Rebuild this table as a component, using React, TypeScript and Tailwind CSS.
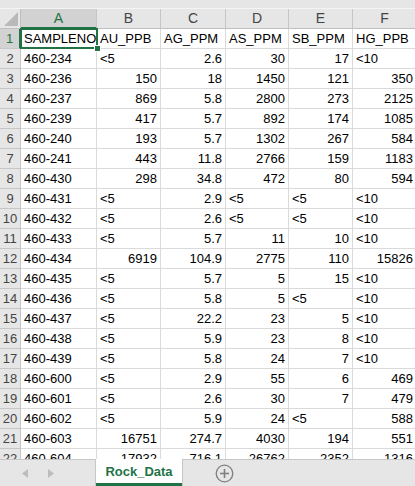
import React from "react";

const raw: string[][] = [
  ["SAMPLENO", "AU_PPB", "AG_PPM", "AS_PPM", "SB_PPM", "HG_PPB"],
  ["460-234", "<5", "2.6", "30", "17", "<10"],
  ["460-236", "150", "18", "1450", "121", "350"],
  ["460-237", "869", "5.8", "2800", "273", "2125"],
  ["460-239", "417", "5.7", "892", "174", "1085"],
  ["460-240", "193", "5.7", "1302", "267", "584"],
  ["460-241", "443", "11.8", "2766", "159", "1183"],
  ["460-430", "298", "34.8", "472", "80", "594"],
  ["460-431", "<5", "2.9", "<5", "<5", "<10"],
  ["460-432", "<5", "2.6", "<5", "<5", "<10"],
  ["460-433", "<5", "5.7", "11", "10", "<10"],
  ["460-434", "6919", "104.9", "2775", "110", "15826"],
  ["460-435", "<5", "5.7", "5", "15", "<10"],
  ["460-436", "<5", "5.8", "5", "<5", "<10"],
  ["460-437", "<5", "22.2", "23", "5", "<10"],
  ["460-438", "<5", "5.9", "23", "8", "<10"],
  ["460-439", "<5", "5.8", "24", "7", "<10"],
  ["460-600", "<5", "2.9", "55", "6", "469"],
  ["460-601", "<5", "2.6", "30", "7", "479"],
  ["460-602", "<5", "5.9", "24", "<5", "588"],
  ["460-603", "16751", "274.7", "4030", "194", "551"],
  ["460-604", "17932", "716.1", "26762", "2352", "1316"],
];

const widths = ["w-[76px]", "w-[64px]", "w-[65px]", "w-[63px]", "w-[64px]", "w-[64px]"];
const letters = ["A", "B", "C", "D", "E", "F"];

function isLeft(v: string, ri: number, ci: number) {
  if (ri === 0 || ci === 0) return true;
  return v.startsWith("<");
}

export default function App() {
  return (
    <div
      className="w-[415px] h-[486px] overflow-hidden flex flex-col bg-white text-[13px] text-black"
      style={{ fontFamily: '"Liberation Sans", Arial, sans-serif' }}
    >
      <div className="flex-1 overflow-hidden flex flex-col">
        <div className="h-[9px] shrink-0 bg-[#e6e6e6] border-b border-[#f4f4f4]" />
        {/* column headers */}
        <div className="flex h-[20px] shrink-0 bg-[#e6e6e6]">
          <div className="w-[21px] shrink-0 relative border-r border-b border-[#bfbfbf]">
            <svg className="absolute right-[2px] bottom-[2px]" width="14" height="14" viewBox="0 0 14 14">
              <polygon points="14,0 14,14 0,14" fill="#b9b9b9" />
            </svg>
          </div>
          {letters.map((l, i) => (
            <div
              key={l}
              className={`${widths[i]} shrink-0 flex items-center justify-center border-r ${
                i === 0
                  ? "bg-[#d2d2d2] text-[#217346] border-b-2 border-b-[#217346] border-r-[#c6c6c6]"
                  : "text-[#444444] border-b border-[#c6c6c6] border-b-[#bfbfbf]"
              } text-[14px]`}
            >
              {l}
            </div>
          ))}
        </div>
        {raw.map((row, ri) => (
          <div key={ri} className={`flex h-[20px] shrink-0 ${ri === 0 ? "relative z-10" : ""}`}>
            <div
              className={`w-[21px] shrink-0 flex items-center justify-center border-r border-b border-[#c6c6c6] text-[13px] ${
                ri === 0 ? "bg-[#d2d2d2] text-[#217346] border-r-2 border-r-[#217346]" : "bg-[#e6e6e6] text-[#444444]"
              }`}
            >
              {ri + 1}
            </div>
            {row.map((v, ci) => (
              <div
                key={ci}
                className={`${widths[ci]} shrink-0 relative flex items-center border-r border-b border-[#dadada] whitespace-nowrap ${
                  isLeft(v, ri, ci) ? "justify-start pl-[3px]" : "justify-end pr-[3px]"
                }`}
              >
                {v}
                {ri === 0 && ci === 0 && (
                  <div className="absolute -left-[1px] -top-[1px] w-[78px] h-[21px] border-2 border-[#217346] pointer-events-none z-10">
                    <div className="absolute -right-[5px] -bottom-[5px] w-[7px] h-[7px] bg-[#217346] border border-white" />
                  </div>
                )}
              </div>
            ))}
          </div>
        ))}
      </div>
      {/* tab bar */}
      <div className="h-[27px] shrink-0 flex bg-[#e6e6e6] border-t border-[#c6c6c6]">
        <div className="w-[96px] shrink-0 flex items-center gap-[20px] pl-[22px] border-r border-[#c6c6c6]">
          <svg width="6" height="9" viewBox="0 0 6 9">
            <polygon points="6,0 6,9 0,4.5" fill="#bdbdbd" />
          </svg>
          <svg width="6" height="9" viewBox="0 0 6 9">
            <polygon points="0,0 0,9 6,4.5" fill="#bdbdbd" />
          </svg>
        </div>
        <div className="w-[87px] shrink-0 -mt-[1px] bg-white flex flex-col border-r border-[#c6c6c6]">
          <div className="flex-1 flex items-center justify-center font-bold text-[13px] text-[#217346] pt-[2px]">
            Rock_Data
          </div>
          <div className="h-[3px] bg-[#217346]" />
        </div>
        <div className="flex items-center pl-[32px]">
          <svg width="19" height="19" viewBox="0 0 19 19">
            <circle cx="9.5" cy="9.5" r="8.3" fill="none" stroke="#7f7f7f" strokeWidth="1.3" />
            <line x1="9.5" y1="5" x2="9.5" y2="14" stroke="#7f7f7f" strokeWidth="1.6" />
            <line x1="5" y1="9.5" x2="14" y2="9.5" stroke="#7f7f7f" strokeWidth="1.6" />
          </svg>
        </div>
      </div>
    </div>
  );
}
